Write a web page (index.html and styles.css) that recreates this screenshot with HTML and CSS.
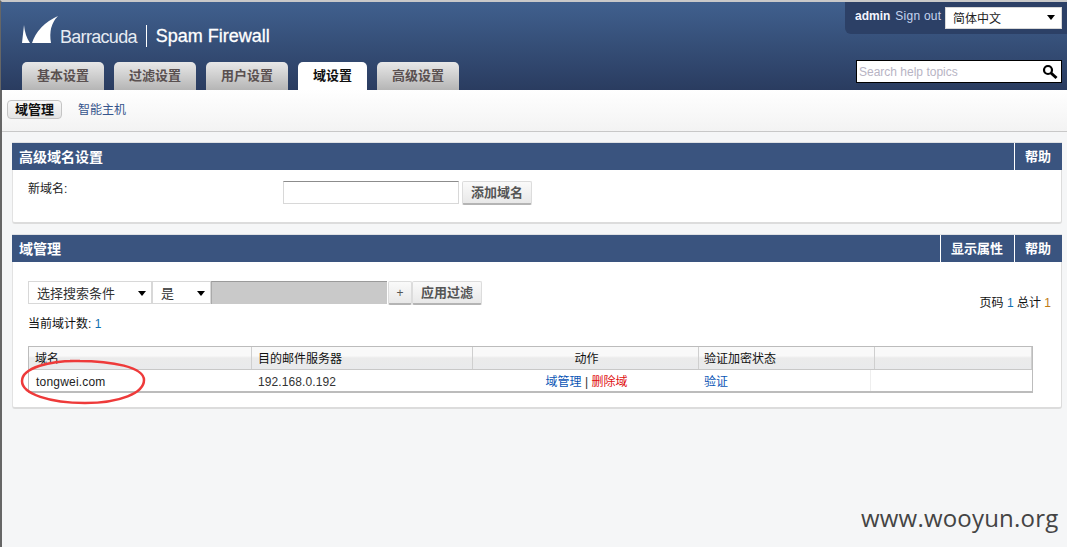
FILE: index.html
```html
<!DOCTYPE html>
<html lang="zh-CN">
<head>
<meta charset="utf-8">
<title>Barracuda Spam Firewall</title>
<link rel="stylesheet" href="styles.css">
</head>
<body>
<div class="page">
  <header class="header">
    <div class="brand">
      <svg class="logo" width="38" height="28" viewBox="0 0 38 28"><path d="M0 27 L2 9 Q3 20 8 27 Z" fill="#fff"/><path d="M10 27 Q16 9 36 0 Q26 10 29 27 Z" fill="#fff"/></svg>
      <span class="brand-name">Barracuda</span>
      <span class="brand-sep"></span>
      <span class="brand-product">Spam Firewall</span>
    </div>
    <nav class="tabs">
      <a class="tab">基本设置</a>
      <a class="tab">过滤设置</a>
      <a class="tab">用户设置</a>
      <a class="tab tab-active">域设置</a>
      <a class="tab">高级设置</a>
    </nav>
    <div class="user-box">
      <b class="user-name">admin</b>
      <span class="sign-out">Sign out</span>
      <div class="lang-select"><span>简体中文</span><i class="caret"></i></div>
    </div>
    <div class="help-search">
      <span>Search help topics</span>
      <svg width="16" height="16" viewBox="0 0 16 16"><circle cx="6" cy="6" r="4" fill="none" stroke="#000" stroke-width="2.2"/><path d="M9 9 L14.5 14" stroke="#000" stroke-width="3"/></svg>
    </div>
  </header>

  <div class="subnav">
    <a class="pill">域管理</a>
    <a class="sublink">智能主机</a>
  </div>

  <main class="content">
    <section class="panel panel-add">
      <div class="panel-head">
        <h2>高级域名设置</h2>
        <a class="head-btn">帮助</a>
      </div>
      <div class="add-body">
        <label class="add-label">新域名:</label>
        <div class="text-input"></div>
        <button class="btn btn-add">添加域名</button>
      </div>
    </section>

    <section class="panel panel-domains">
      <div class="panel-head">
        <h2>域管理</h2>
        <a class="head-btn">显示属性</a>
        <a class="head-btn">帮助</a>
      </div>
      <div class="domains-body">
        <div class="filter-row">
          <div class="select sel-wide"><span>选择搜索条件</span><i class="caret"></i></div>
          <div class="select sel-narrow"><span>是</span><i class="caret"></i></div>
          <div class="disabled-input"></div>
          <button class="btn btn-plus">+</button>
          <button class="btn btn-apply">应用过滤</button>
          <div class="pager">页码 <em class="num-blue">1</em> 总计 <em class="num-orange">1</em></div>
        </div>
        <div class="count">当前域计数: <em class="num-blue">1</em></div>
        <div class="table">
          <div class="row row-head">
            <div class="cell c1">域名</div>
            <div class="cell c2">目的邮件服务器</div>
            <div class="cell c3 center">动作</div>
            <div class="cell c4">验证加密状态</div>
            <div class="cell c5"></div>
          </div>
          <div class="row row-body">
            <div class="cell c1">tongwei.com</div>
            <div class="cell c2">192.168.0.192</div>
            <div class="cell c3 center"><a class="link">域管理</a> <span class="bar">|</span> <a class="link-red">删除域</a></div>
            <div class="cell c4"><a class="link">验证</a></div>
            <div class="cell c5"></div>
          </div>
        </div>
      </div>
    </section>
  </main>

  <svg class="annotation" width="128" height="50" viewBox="0 0 128 50"><path d="M60 3 C30 2 2 10 2 23 C2 36 30 45 65 45 C100 45 124 35 124 22 C124 10 95 2 50 3" fill="none" stroke="#ee3a3a" stroke-width="2.5"/></svg>
  <div class="watermark">www.wooyun.org</div>
</div>
</body>
</html>
```
FILE: styles.css
```css
* { box-sizing: border-box; }
html, body { margin: 0; padding: 0; }
body {
  width: 1067px;
  height: 547px;
  overflow: hidden;
  background: #f6f6f6;
  font-family: "Liberation Sans", "Noto Sans CJK SC", sans-serif;
  font-size: 12px;
  color: #111;
}
.page {
  position: relative;
  height: 547px;
  border-left: 2px solid #666;
  border-top: 2px solid #c9c9c9;
  background: #f5f6f7;
}
.header {
  position: relative;
  height: 88px;
  margin-left: -1px;
  background: linear-gradient(#40608e, #2a3c60);
}
.brand {
  display: flex;
  align-items: flex-start;
  padding: 14px 0 0 21px;
  color: #fff;
}
.logo { display: block; flex: none; }
.brand-name { margin: 9px 0 0 0; font-size: 18px; line-height: 24px; letter-spacing: -0.7px; color: #e6ebf2; }
.brand-sep { width: 1px; height: 22px; margin: 9px 9px 0 9px; background: #fff; }
.brand-product { margin-top: 8px; font-size: 18px; line-height: 24px; -webkit-text-stroke: 0.3px #fff; }
.tabs {
  position: absolute;
  left: 21px;
  bottom: 0;
  display: flex;
  gap: 10px;
}
.tab {
  display: block;
  height: 28px;
  padding: 6px 15px 0;
  width: 82px;
  border-radius: 5px 5px 0 0;
  background: linear-gradient(#e8e8e8, #b5b5b5);
  color: #5a5050;
  font-size: 13px;
  font-weight: bold;
  line-height: 16px;
  text-align: center;
  white-space: nowrap;
}
.tab-active { width: 69px; background: #fff; color: #111; }
.user-box {
  position: absolute;
  top: 0;
  right: 0;
  width: 222px;
  height: 32px;
  padding: 5px 0 0 10px;
  display: flex;
  align-items: flex-start;
  border-radius: 0 0 0 6px;
  background: #2c4066;
}
.user-name { margin-top: 2px; color: #f4f6ff; font-size: 12px; }
.sign-out { margin: 2px 0 0 5px; color: #c5d4f0; font-size: 12px; letter-spacing: 0.25px; }
.lang-select {
  position: absolute;
  top: 5px;
  left: 100px;
  width: 117px;
  height: 22px;
  padding: 3px 0 0 7px;
  display: flex;
  background: #fff;
  border: 1px solid #d8d8d8;
  font-size: 12px;
  line-height: 16px;
  color: #222;
}
.caret {
  width: 0;
  height: 0;
  border: 4px solid transparent;
  border-top: 5px solid #000;
  border-bottom: 0;
}
.lang-select .caret { position: absolute; right: 6px; top: 7px; }
.help-search {
  position: absolute;
  top: 58px;
  left: 855px;
  width: 206px;
  height: 23px;
  padding: 0 0 0 2px;
  display: flex;
  align-items: center;
  justify-content: space-between;
  background: #fff;
  border: 1px solid #000;
  color: #b7b4c4;
  font-size: 12px;
}
.help-search svg { margin-right: 3px; }
.subnav {
  height: 42px;
  padding: 10px 0 0 5px;
  display: flex;
  align-items: flex-start;
  gap: 16px;
  background: linear-gradient(#fff, #f3f3f3);
  border-bottom: 1px solid #c8c8c8;
}
.pill {
  width: 55px;
  height: 19px;
  border: 1px solid #c4c4c4;
  border-radius: 4px;
  background: linear-gradient(#f8f8f8, #e4e4e4);
  font-size: 13px;
  font-weight: bold;
  line-height: 17px;
  text-align: center;
  color: #111;
}
.sublink { color: #36558c; font-size: 12px; line-height: 20px; }
.content {
  display: flex;
  flex-direction: column;
  gap: 10px;
  padding: 10px 5px 0 10px;
}
.panel {
  border-right: 1px solid #dcdcdc;
  border-bottom: 2px solid #dcdcdc;
  border-left: 1px solid #e2e2e2;
  border-top: 1px solid #dfe1e4;
  border-radius: 0 0 3px 3px;
  background: #fff;
}
.panel-add { height: 82px; }
.panel-domains { height: 175px; }
.panel-head {
  height: 27px;
  margin: 0 -1px 0 -1px;
  display: flex;
  background: #3a547f;
  color: #fff;
}
.panel-head h2 {
  flex: 1;
  margin: 0;
  padding-left: 7px;
  font-size: 14px;
  font-weight: bold;
  line-height: 29px;
}
.head-btn {
  display: block;
  padding: 0 11px 0 10px;
  border-left: 1px solid #fff;
  font-size: 13px;
  font-weight: bold;
  line-height: 27px;
  white-space: nowrap;
}
.add-body { display: flex; align-items: flex-start; padding: 11px 0 0 15px; }
.add-label { width: 255px; font-size: 12px; line-height: 16px; color: #222; }
.text-input {
  width: 176px;
  height: 23px;
  background: #fff;
  border: 1px solid #d8d8d8;
  border-top-color: #8c8c8c;
}
.btn {
  margin: 0;
  padding: 1px 0 0;
  border: 1px solid #dcdcdc;
  border-bottom: 2px solid #b4b4b4;
  border-radius: 2px;
  background: linear-gradient(#fafafa, #e8e8e8);
  color: #555;
  font-family: inherit;
  font-size: 13px;
  font-weight: bold;
  line-height: 16px;
}
.btn-add { width: 70px; height: 24px; margin-left: 3px; }
.domains-body { padding: 19px 28px 0 15px; }
.filter-row { position: relative; display: flex; align-items: flex-start; height: 24px; }
.select {
  position: relative;
  height: 23px;
  padding: 3px 0 0 8px;
  background: #fff;
  border: 1px solid #d8d8d8;
  font-size: 13px;
  line-height: 18px;
  color: #333;
}
.select .caret { position: absolute; right: 5px; top: 9px; }
.sel-wide { width: 124px; }
.sel-narrow { width: 59px; }
.disabled-input { width: 176px; height: 23px; background: #c9c9c9; border-top: 1px solid #9a9a9a; border-left: 1px solid #aaa; }
.btn-plus { width: 24px; height: 24px; margin-left: 1px; font-weight: normal; font-size: 12px; }
.btn-apply { width: 70px; height: 24px; }
.pager { position: absolute; right: -18px; top: 14px; font-size: 12px; line-height: 16px; color: #111; }
em { font-style: normal; }
.num-blue { color: #0f6fb0; }
.num-orange { color: #c07a15; }
.count { margin-top: 11px; font-size: 12px; line-height: 16px; color: #111; }
.table {
  width: 1005px;
  height: 47px;
  margin-top: 14px;
  border: 1px solid #bcbcbc;
  border-bottom-width: 2px;
  background: #fff;
}
.row { display: flex; }
.row-head { height: 23px; background: linear-gradient(#f9f9f9 40%, #ebebeb 50%, #e9eaec); border-bottom: 1px solid #c8c8c8; }
.row-body { height: 21px; }
.cell { line-height: 21px; white-space: nowrap; font-size: 12px; }
.row-head .cell { line-height: 25px; border-right: 1px solid #cfcfcf; color: #111; }
.c1 { width: 223px; padding-left: 7px; }
.c2 { width: 221px; padding-left: 6px; }
.c3 { width: 226px; }
.c4 { width: 176px; padding-left: 5px; }
.c5 { flex: 1; }
.row-head .c1 { padding-left: 6px; }
.row-head .c3 { padding-left: 2px; }
.row-body .cell { line-height: 24px; }
.row-body .c3 { padding-left: 1px; }
.row-body .c4 { width: 172px; border-right: 1px solid #eee; }
.center { text-align: center; }
.row-body .c1 { color: #222; letter-spacing: 0.2px; }
.row-body .c2 { color: #333; letter-spacing: 0.1px; }
.link { color: #0a55b5; }
.link-red { color: #e01010; }
.bar { color: #333; }
.annotation { position: absolute; left: 18px; top: 356px; }
.watermark {
  position: absolute;
  left: 859px;
  top: 501px;
  font-family: "Open Sans", sans-serif;
  font-size: 24px;
  line-height: 30px;
  letter-spacing: 0.2px;
  color: #444;
  white-space: nowrap;
}
```
